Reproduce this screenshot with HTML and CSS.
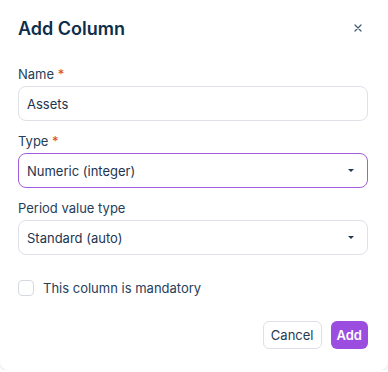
FILE: index.html
```html
<!DOCTYPE html>
<html>
<head>
    <title>Add Column</title>
    <link rel="stylesheet" href="styles.css">
</head>
<body>
    <div class="dialog">
        <div class="dialog-header">
            <h2>Add Column</h2>
            <button class="close-btn" aria-label="Close">
                <svg width="8" height="8" viewBox="0 0 8 8">
                    <path d="M1 1L7 7M7 1L1 7" stroke="#3d5a73" stroke-width="1.2" stroke-linecap="round"/>
                </svg>
            </button>
        </div>

        <div class="field">
            <label>Name <span class="req">*</span></label>
            <div class="input">Assets</div>
        </div>

        <div class="field">
            <label>Type <span class="req">*</span></label>
            <div class="input select focused">
                <span>Numeric (integer)</span>
                <span class="caret"></span>
            </div>
        </div>

        <div class="field">
            <label>Period value type</label>
            <div class="input select">
                <span>Standard (auto)</span>
                <span class="caret"></span>
            </div>
        </div>

        <div class="check-row">
            <span class="checkbox"></span>
            <span>This column is mandatory</span>
        </div>

        <div class="actions">
            <button class="btn btn-cancel">Cancel</button>
            <button class="btn btn-add">Add</button>
        </div>
    </div>
</body>
</html>
```

FILE: styles.css
```css
body {
    margin: 0;
    font-family: Inter, "Noto Sans", sans-serif;
    background: #ffffff;
    color: #1f3a52;
}

.dialog {
    width: 388px;
    height: 370px;
    box-sizing: border-box;
    padding: 16px 20px 0 18px;
    background: white;
    border-radius: 0 0 8px 8px;
    box-shadow: 0 1px 3px rgba(0,0,0,0.12);
}

.dialog-header {
    display: flex;
    justify-content: space-between;
    align-items: center;
    margin-bottom: 24px;
}

.dialog-header h2 {
    margin: 0;
    font-size: 18px;
    font-weight: 600;
    line-height: 26px;
    color: #0e2e4a;
}

.close-btn {
    background: none;
    border: none;
    padding: 0;
    margin-right: 5px;
    margin-top: -3px;
    width: 10px;
    height: 10px;
    display: flex;
    align-items: center;
    justify-content: center;
    cursor: pointer;
}

.field {
    margin-bottom: 12px;
}

label {
    display: block;
    font-size: 13px;
    line-height: 16px;
    color: #26405a;
    margin-bottom: 4px;
}

.req {
    color: #d9472b;
}

.input {
    height: 35px;
    box-sizing: border-box;
    border: 1px solid #dfe1e8;
    border-radius: 8px;
    padding: 0 8px;
    display: flex;
    align-items: center;
    font-size: 13px;
    color: #1c3550;
}

.select {
    justify-content: space-between;
    padding-right: 13px;
}

.focused {
    border-color: #a35ddf;
}

.caret {
    width: 0;
    height: 0;
    border-left: 3px solid transparent;
    border-right: 3px solid transparent;
    border-top: 3px solid #1f3a52;
}

.check-row {
    display: flex;
    align-items: center;
    gap: 9px;
    margin-top: 25px;
    font-size: 13px;
    line-height: 16px;
    color: #26405a;
}

.checkbox {
    width: 14px;
    height: 14px;
    border: 1px solid #d4d8e0;
    border-radius: 4px;
}

.actions {
    display: flex;
    justify-content: flex-end;
    gap: 9px;
    margin-top: 25px;
}

.btn {
    font-family: Inter, "Noto Sans", sans-serif;
    font-size: 13px;
    height: 28px;
    border-radius: 6px;
    cursor: pointer;
}

.btn-cancel {
    background: white;
    border: 1px solid #dde0e8;
    color: #1f3a52;
    padding: 0 7px;
}

.btn-add {
    background: #9b4de0;
    border: none;
    color: white;
    font-weight: 600;
    padding: 0 6px;
}
```
